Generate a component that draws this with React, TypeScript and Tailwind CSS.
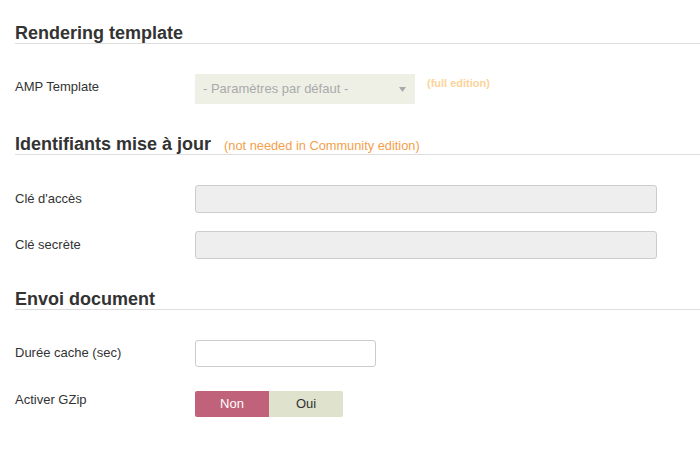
import React from "react";

const font = { fontFamily: '"Liberation Sans", Arial, sans-serif' };

function Heading({ title, note, mt = "mt-[30px]" }: { title: string; note?: string; mt?: string }) {
  return (
    <div className={`${mt} h-[21px] border-b border-[#dddddd] flex items-baseline`}>
      <h2 className="text-[18px] leading-[20px] font-bold text-[#333333]">{title}</h2>
      {note && <span className="ml-[13px] text-[12.8px] leading-[20px] text-[#f4a04c]">{note}</span>}
    </div>
  );
}

function Row({ label, children, mt = "mt-[30px]", pt = "" }: { label: string; children: React.ReactNode; mt?: string; pt?: string }) {
  return (
    <div className={`${mt} flex items-start`}>
      <label className={`w-[180px] shrink-0 text-[13px] leading-[18px] text-[#333333] ${pt}`}>{label}</label>
      {children}
    </div>
  );
}

export default function App() {
  return (
    <div style={font} className="w-[700px] h-[450px] bg-white pl-[15px] overflow-hidden">
      <Heading title="Rendering template" mt="mt-[23px]" />

      <Row label="AMP Template" pt="pt-[4px]">
        <div className="w-[220px] h-[30px] bg-[#eef0e6] flex items-center justify-between pl-[8px] pr-[9px]">
          <span className="text-[13px] text-[#aaaaaa]">- Paramètres par défaut -</span>
          <svg width="7" height="5" viewBox="0 0 7 5"><path d="M0 0h7L3.5 5z" fill="#aaaaaa" /></svg>
        </div>
        <span className="ml-[12px] mt-[2px] text-[11px] leading-[14px] font-bold text-[#fcd49b]">(full edition)</span>
      </Row>

      <Heading title="Identifiants mise à jour" note="(not needed in Community edition)" />

      <Row label="Clé d'accès" pt="pt-[5px]">
        <div className="w-[462px] h-[28px] bg-[#eeeeee] border border-[#cccccc] rounded-[3px]" />
      </Row>
      <Row label="Clé secrète" mt="mt-[18px]" pt="pt-[5px]">
        <div className="w-[462px] h-[28px] bg-[#eeeeee] border border-[#cccccc] rounded-[3px]" />
      </Row>

      <Heading title="Envoi document" />

      <Row label="Durée cache (sec)" pt="pt-[4px]">
        <input type="text" className="w-[181px] h-[27px] bg-white border border-[#cccccc] rounded-[3px] outline-none px-2 text-[13px]" />
      </Row>

      <Row label="Activer GZip" mt="mt-[24px]">
        <div className="flex h-[26px] rounded-[2px] overflow-hidden text-[13px]">
          <button className="w-[74px] bg-[#c0627a] text-white">Non</button>
          <button className="w-[74px] bg-[#dfe2cd] text-[#333333]">Oui</button>
        </div>
      </Row>
    </div>
  );
}
